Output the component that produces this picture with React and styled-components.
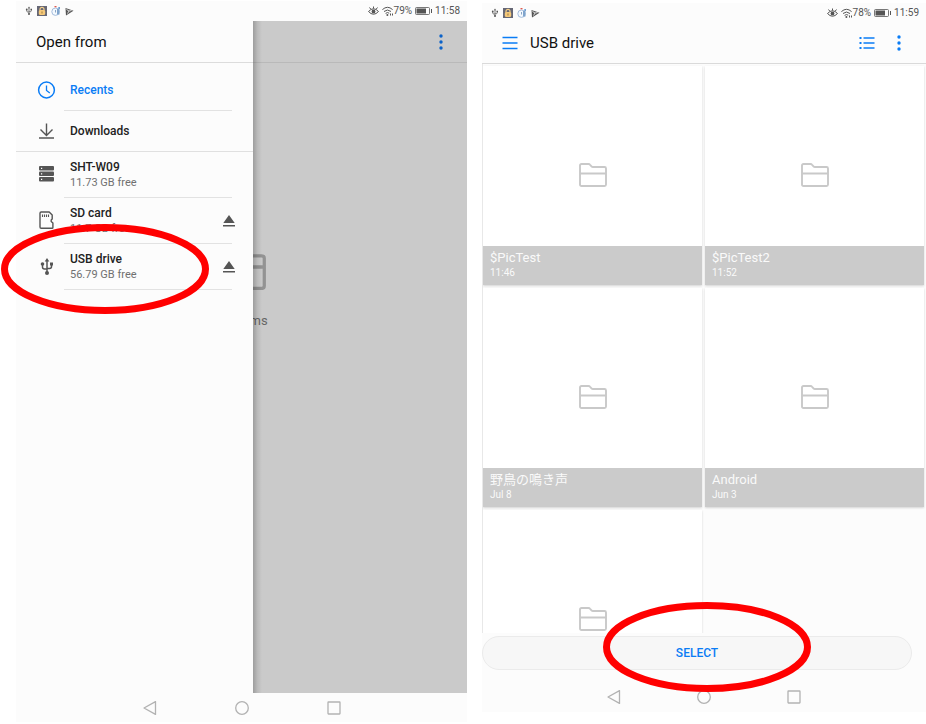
import React from "react";
import styled, { createGlobalStyle } from "styled-components";

const GlobalStyle = createGlobalStyle`
  * { box-sizing: border-box; }
  body { margin: 0; background: #fff; font-family: Roboto, "Noto Sans CJK JP", sans-serif; }
  button { font: inherit; color: inherit; background: none; border: 0; padding: 0; text-align: left; cursor: pointer; }
  svg { display: block; flex: none; }
  ul { list-style: none; margin: 0; padding: 0; }
`;

const Page = styled.main`
  display: grid;
  grid-template-columns: 451fr 444fr;
  gap: 15px;
  height: 100vh;
  min-height: 480px;
  padding: 1px 0 2px 16px;
  overflow: hidden;
`;

const Phone = styled.section`
  display: flex;
  flex-direction: column;
  min-width: 0;
  min-height: 0;
  background: #fcfcfc;
  margin: ${(p) => (p.$inset ? "2px 0 10px" : "0")};
`;

const StatusBar = styled.div`
  display: flex;
  justify-content: space-between;
  align-items: center;
  height: 20px;
  padding: 0 7px 0 9px;
  font-size: 10px;
  line-height: 14px;
  color: #555;
`;

const StatusGroup = styled.div`
  display: flex;
  align-items: center;
  gap: ${(p) => p.$gap}px;
`;

const Body = styled.div`
  display: grid;
  grid-template: minmax(0, 1fr) / minmax(0, 1fr);
  flex: 1;
  min-height: 0;
`;

const Dimmed = styled.div`
  grid-area: 1 / 1;
  display: flex;
  flex-direction: column;
  background: #cacaca;
`;

const DimmedHeader = styled.div`
  display: flex;
  justify-content: flex-end;
  align-items: center;
  height: 42px;
  padding-right: 19px;
  border-bottom: 1px solid #b9b9b9;
  color: #0b62c9;
`;

const Empty = styled.div`
  display: flex;
  flex-direction: column;
  align-items: center;
  gap: 22px;
  padding-top: 186px;
  font-size: 13px;
  line-height: 18px;
  color: #666;
`;

const Drawer = styled.nav`
  grid-area: 1 / 1;
  justify-self: start;
  position: relative;
  width: 237px;
  background: #fcfcfc;
  z-index: 1;

  &::after {
    content: "";
    position: absolute;
    top: 0;
    bottom: 0;
    left: 100%;
    width: 9px;
    background: linear-gradient(to right, rgba(0, 0, 0, 0.22), rgba(0, 0, 0, 0.08) 50%, transparent);
  }
`;

const Title = styled.h1`
  margin: 0;
  font-size: 15px;
  line-height: 20px;
  font-weight: 400;
  color: #111;
`;

const DrawerHeader = styled.header`
  display: flex;
  align-items: center;
  height: 42px;
  padding-left: 20px;
  border-bottom: 1px solid #dcdcdc;
`;

const Places = styled.ul`
  padding-top: ${(p) => p.$top}px;
  border-bottom: ${(p) => (p.$ruled ? "1px solid #e0e0e0" : "0")};
`;

const Place = styled.li`
  position: relative;
`;

const PlaceLine = styled.div`
  display: flex;
  align-items: center;
  height: ${(p) => (p.$tall ? 45 : 40)}px;
  padding-right: 18px;
`;

const PlaceButton = styled.button`
  display: flex;
  align-items: center;
  flex: 1;
  gap: 14px;
  height: 100%;
  padding-left: 20px;
  color: #555;
`;

const PlaceName = styled.span`
  display: block;
  font-size: 12px;
  line-height: 16px;
  font-weight: 500;
  color: ${(p) => (p.$active ? "#0a7cf5" : "#222")};
`;

const PlaceNote = styled.span`
  display: block;
  font-size: 11px;
  line-height: 15px;
  color: #707070;
`;

const Divider = styled.div`
  height: 1px;
  margin: 0 21px 0 48px;
  background: #e2e2e2;
`;

const IconButton = styled.button`
  display: flex;
`;

const Ring = styled.svg`
  position: absolute;
  z-index: 2;
  left: ${(p) => p.$left};
  top: ${(p) => p.$top};
  pointer-events: none;
`;

const SystemNav = styled.nav`
  display: flex;
  justify-content: center;
  align-items: center;
  gap: ${(p) => p.$gap}px;
  height: ${(p) => p.$height}px;
  color: #b2b2b2;
`;

const AppHeader = styled.header`
  display: flex;
  align-items: center;
  height: 41px;
  padding: 0 20px;
  border-bottom: 1px solid #dadada;
  color: #0a7cf5;
`;

const HeaderTitle = styled(Title)`
  flex: 1;
  margin-left: 12px;
`;

const HeaderActions = styled.div`
  display: flex;
  align-items: center;
  gap: 17px;
`;

const FolderScroll = styled.div`
  flex: 1;
  min-height: 0;
  overflow: hidden;
  border-left: 1px solid #e8e8e8;
  padding: 2px 2px 0 0;
`;

const FolderGrid = styled.ul`
  display: grid;
  grid-template-columns: 1fr 1fr;
  gap: 3px;
`;

const FolderTile = styled.button`
  display: grid;
  grid-template: minmax(0, 1fr) / minmax(0, 1fr);
  width: 100%;
  aspect-ratio: 1;
  background: #fff;
  box-shadow: 0 1px 2px rgba(0, 0, 0, 0.16);
`;

const TileIcon = styled.span`
  grid-area: 1 / 1;
  place-self: center;
  padding-bottom: 2px;
  color: #c9c9c9;
`;

const Caption = styled.span`
  grid-area: 1 / 1;
  align-self: end;
  padding: 4px 7px 5px;
  background: #cbcbcb;
  color: #fafafa;
`;

const FolderName = styled.span`
  display: block;
  font-size: 13px;
  line-height: 16px;
`;

const FolderDate = styled.span`
  display: block;
  font-size: 10px;
  line-height: 14px;
`;

const SelectBar = styled.div`
  position: relative;
  margin: 3px 14px 12px 0;
`;

const SelectButton = styled.button`
  display: block;
  width: 100%;
  height: 34px;
  border: 1px solid #ebebeb;
  border-radius: 17px;
  background: #f7f7f7;
  color: #0a7cf5;
  font-size: 12px;
  line-height: 16px;
  font-weight: 500;
  text-align: center;
`;

const stroke = { fill: "none", stroke: "currentColor" };

const UsbShape = () => (
  <g>
    <path {...stroke} strokeWidth="1.500" d="M8 3v12M3.500 6.500v2.500q0 2 2 2H8M12.500 6.500v2q0 2-2 2H8" />
    <path fill="currentColor" d="M8 0l2.300 3.600H5.700zM11 4.500h3v3h-3z" />
    <circle cx="3.500" cy="6" r="1.800" fill="currentColor" />
    <circle cx="8" cy="15" r="2" fill="currentColor" />
  </g>
);
const UsbSmall = () => (
  <svg width="8" height="10" viewBox="0 0 16 18"><UsbShape /></svg>
);
const UsbIcon = () => (
  <svg width="20" height="20" viewBox="-3 -1 20 20"><UsbShape /></svg>
);
const LockIcon = () => (
  <svg width="10" height="10" viewBox="0 0 10 10">
    <path fill="#666775" d="M0 0h10v10H0z" />
    <path fill="none" stroke="#f5d08a" strokeWidth="1.200" d="M3 5V3.300a2 2 0 0 1 4 0V5" />
    <rect x="1.800" y="4" width="6.400" height="5" rx="1.500" fill="#f5c97a" />
    <path fill="#a07c40" d="M4.500 5.500h1v2h-1z" />
  </svg>
);
const StopwatchIcon = () => (
  <svg width="10" height="10" viewBox="0 0 10 10">
    <circle cx="4.500" cy="5.700" r="3.700" fill="#f4f9fe" stroke="#a3bcdc" />
    <path stroke="#6c8fb8" strokeWidth=".8" d="M4.500 4v2.500" />
    <path fill="#7fa4cc" d="M6 3h2.500v5.500H6z" />
    <path fill="#e2584e" d="M3.500 0h2v1.300h-2z" />
    <path fill="#6f9fd2" d="M7.300 1h1.700v2H7.300z" />
  </svg>
);
const PlayIcon = () => (
  <svg width="9" height="9" viewBox="0 0 9 9">
    <path fill="#555" d="M.5 1L8.500 3.800 1 8.500z" />
    <path stroke="#fcfcfc" d="M1.500 2.500L4 4l2.500-.5M4 4L2.500 6.500" fill="none" strokeWidth=".8" />
  </svg>
);
const EyeIcon = () => (
  <svg width="11" height="10" viewBox="0 0 11 10">
    <path {...stroke} d="M.5 5.500Q5.500 0 10.500 5.500 5.500 11 .5 5.500zM1.500 1.500l1.200 1.500M9.500 1.500L8.300 3M5.500.5v2" />
    <circle cx="5.500" cy="5.500" r="1.900" fill="currentColor" />
  </svg>
);
const WifiIcon = () => (
  <svg width="11" height="10" viewBox="0 0 11 10">
    <path {...stroke} d="M.4 3.600Q5.500-1 10.600 3.600M2 5.500q3.500-3 7 0M3.600 7.400q1.900-1.600 3.600-.2" />
    <circle cx="5.400" cy="8.900" r="1" fill="currentColor" />
    <path fill="currentColor" d="M8 7.500h1v2H8zM10 7.500h1v2h-1z" />
  </svg>
);
const BatteryIcon = () => (
  <svg width="17" height="8" viewBox="0 0 17 8">
    <rect {...stroke} strokeWidth=".8" x=".5" y=".5" width="14" height="7" rx="1" />
    <path fill="currentColor" d="M1.500 1.500h9.500v5H1.500zM16 2h1v4h-1z" />
  </svg>
);
const MoreIcon = () => (
  <svg width="14" height="18" viewBox="0 0 14 18" fill="currentColor">
    <circle cx="7" cy="3" r="1.700" /><circle cx="7" cy="9" r="1.700" /><circle cx="7" cy="15" r="1.700" />
  </svg>
);
const MenuIcon = () => (
  <svg width="16" height="14" viewBox="0 0 16 14">
    <path {...stroke} strokeWidth="1.300" d="M.5 1.500h15M.5 7h15M.5 12.500h15" />
  </svg>
);
const ListIcon = () => (
  <svg width="16" height="14" viewBox="0 0 16 14">
    <path {...stroke} strokeWidth="1.300" d="M4.500 2h11M4.500 7h11M4.500 12h11" />
    <path fill="currentColor" d="M.5 1h2v2h-2zM.5 6h2v2h-2zM.5 11h2v2h-2z" />
  </svg>
);
const ClockIcon = () => (
  <svg width="20" height="20" viewBox="0 0 20 20" color="#0a7cf5">
    <circle {...stroke} cx="10.500" cy="10" r="7.900" strokeWidth="1.500" />
    <path {...stroke} strokeWidth="1.300" d="M10.500 5.500v5l3.300 2.500" />
  </svg>
);
const DownloadIcon = () => (
  <svg width="20" height="20" viewBox="0 0 20 20">
    <path {...stroke} strokeWidth="1.400" d="M10.500 2.500v12M4.500 8.500l6 6 6-6M3 17h15" />
  </svg>
);
const StorageIcon = () => (
  <svg width="20" height="20" viewBox="0 1 20 20">
    <rect x="3" y="2" width="15" height="4.500" rx="1" fill="currentColor" />
    <rect x="3" y="7.500" width="15" height="4.500" rx="1" fill="currentColor" />
    <rect x="3" y="13" width="15" height="4.500" rx="1" fill="currentColor" />
    <path fill="#fff" d="M5 3.700h1.200v1.200H5zM5 9.200h1.200v1.200H5zM5 14.700h1.200v1.200H5z" />
  </svg>
);
const SdIcon = () => (
  <svg width="20" height="20" viewBox="0 1 20 20">
    <path {...stroke} strokeWidth="1.400" strokeLinejoin="round" d="M5.200 2h8l3 3v4l-1 1v1.500l1.700 1.500v4.500q0 .8-.8.800H5.200q-1.200 0-1.200-1.200V3.200Q4 2 5.200 2z" />
    <path {...stroke} strokeWidth="1.100" d="M6.500 4.500v2.500M8.500 4.500v2.500M10.500 4.500v2.500M12.500 4.500v2.500" />
  </svg>
);
const EjectIcon = () => (
  <svg width="12" height="12" viewBox="0 0 12 12" fill="#555">
    <path d="M6 0l5.700 8H.3zM0 10h12v1.500H0z" />
  </svg>
);
const FolderIcon = ({ size = 28, color }) => (
  <svg width={size} height={(size * 24) / 28} viewBox="0 0 28 24" color={color}>
    <path {...stroke} strokeWidth="1.900" strokeLinejoin="round" d="M2.500 1h7q1 0 1.600.8l1.400 1.600q.5.600 1.500.600H25.500Q27 4 27 5.500v16q0 1.500-1.500 1.500h-23Q1 23 1 21.500v-19Q1 1 2.500 1zM1 10.500h26" />
  </svg>
);

const Highlight = (props) => (
  <Ring width="208" height="90" viewBox="0 0 208 90" aria-hidden="true" {...props}>
    <ellipse cx="104" cy="45" rx="100.500" ry="41.500" fill="none" stroke="#f00" strokeWidth="7" />
  </Ring>
);

function Status({ battery, time }) {
  return (
    <StatusBar>
      <StatusGroup $gap={4}><UsbSmall /><LockIcon /><StopwatchIcon /><PlayIcon /></StatusGroup>
      <StatusGroup $gap={3}>
        <EyeIcon />
        <StatusGroup $gap={1}><WifiIcon /><span>{battery}</span></StatusGroup>
        <BatteryIcon />
        <span>{time}</span>
      </StatusGroup>
    </StatusBar>
  );
}

function System({ gap, height }) {
  return (
    <SystemNav $gap={gap} $height={height} aria-label="System">
      <IconButton aria-label="Back">
        <svg width="14" height="14" viewBox="0 0 14 14"><path {...stroke} strokeWidth="1.300" strokeLinejoin="round" d="M1 7l11.500-6.400v12.800z" /></svg>
      </IconButton>
      <IconButton aria-label="Home">
        <svg width="14" height="14" viewBox="0 0 14 14"><circle {...stroke} strokeWidth="1.300" cx="7" cy="7" r="6.300" /></svg>
      </IconButton>
      <IconButton aria-label="Overview">
        <svg width="14" height="14" viewBox="0 0 14 14"><rect {...stroke} strokeWidth="1.300" x="1" y="1" width="12" height="12" rx=".5" /></svg>
      </IconButton>
    </SystemNav>
  );
}

function PlaceRow({ icon, name, note, active, eject, last, marked }) {
  return (
    <Place>
      <PlaceLine $tall={!!note}>
        <PlaceButton>
          {icon}
          <span>
            <PlaceName $active={active}>{name}</PlaceName>
            {note && <PlaceNote>{note}</PlaceNote>}
          </span>
        </PlaceButton>
        {eject && <IconButton aria-label={`Eject ${name}`}><EjectIcon /></IconButton>}
      </PlaceLine>
      {!last && <Divider />}
      {marked && <Highlight $left="-15px" $top="-20px" />}
    </Place>
  );
}

const folders = [
  { name: "$PicTest", date: "11:46" },
  { name: "$PicTest2", date: "11:52" },
  { name: "野鳥の鳴き声", date: "Jul 8" },
  { name: "Android", date: "Jun 3" },
  {},
];

export default function App() {
  return (
    <>
      <GlobalStyle />
      <Page>
        <Phone>
          <Status battery="79%" time="11:58" />
          <Body>
            <Dimmed>
              <DimmedHeader><IconButton aria-label="More options"><MoreIcon /></IconButton></DimmedHeader>
              <Empty>
                <FolderIcon size={48} color="#939393" />
                <span>No items</span>
              </Empty>
            </Dimmed>
            <Drawer aria-label="Open from">
              <DrawerHeader><Title>Open from</Title></DrawerHeader>
              <Places $top={7} $ruled>
                <PlaceRow icon={<ClockIcon />} name="Recents" active />
                <PlaceRow icon={<DownloadIcon />} name="Downloads" last />
              </Places>
              <Places $top={0}>
                <PlaceRow icon={<StorageIcon />} name="SHT-W09" note="11.73 GB free" />
                <PlaceRow icon={<SdIcon />} name="SD card" note="11.7 GB free" eject />
                <PlaceRow icon={<UsbIcon />} name="USB drive" note="56.79 GB free" eject marked />
              </Places>
            </Drawer>
          </Body>
          <System gap={78} height={29} />
        </Phone>
        <Phone $inset>
          <Status battery="78%" time="11:59" />
          <AppHeader>
            <IconButton aria-label="Menu"><MenuIcon /></IconButton>
            <HeaderTitle>USB drive</HeaderTitle>
            <HeaderActions>
              <IconButton aria-label="List view"><ListIcon /></IconButton>
              <IconButton aria-label="More options"><MoreIcon /></IconButton>
            </HeaderActions>
          </AppHeader>
          <FolderScroll>
            <FolderGrid>
              {folders.map((f, i) => (
                <li key={i}>
                  <FolderTile aria-label={f.name || "Folder"}>
                    <TileIcon><FolderIcon /></TileIcon>
                    {f.name && (
                      <Caption>
                        <FolderName>{f.name}</FolderName>
                        <FolderDate>{f.date}</FolderDate>
                      </Caption>
                    )}
                  </FolderTile>
                </li>
              ))}
            </FolderGrid>
          </FolderScroll>
          <SelectBar>
            <SelectButton>SELECT</SelectButton>
            <Highlight $left="calc(50% - 94px)" $top="-34px" />
          </SelectBar>
          <System gap={76} height={30} />
        </Phone>
      </Page>
    </>
  );
}
